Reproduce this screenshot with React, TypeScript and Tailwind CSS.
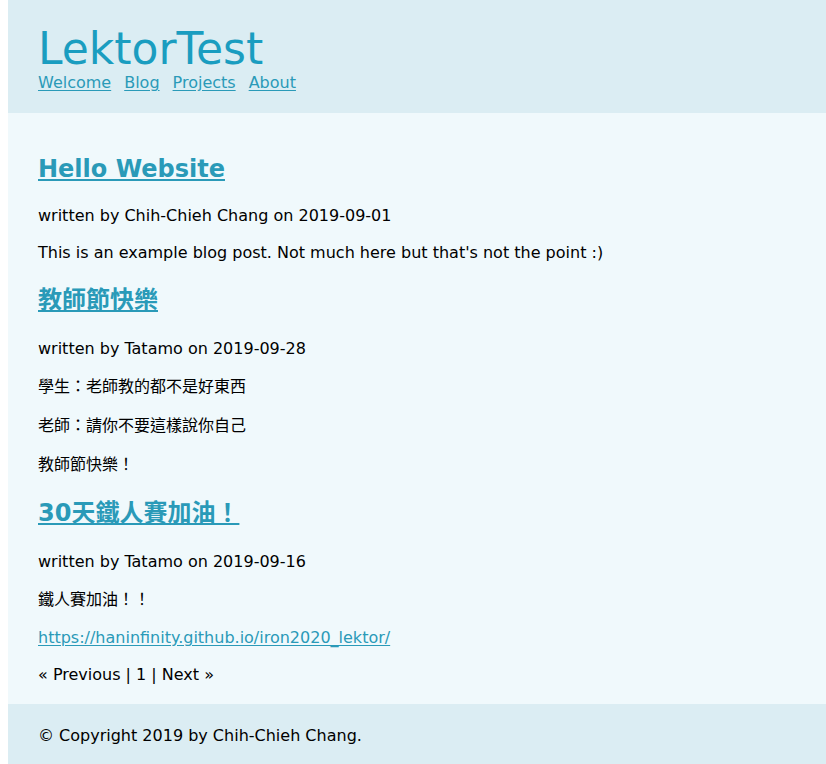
import React from 'react';

const font = "font-['DejaVu_Sans','Noto_Sans_CJK_TC',sans-serif]";
const linkCls = 'text-[#2a9ab8] underline underline-offset-[2px]';

function PostTitle({ children, cjk }: { children: React.ReactNode; cjk?: boolean }) {
  return (
    <h2
      className={`mt-[22px] text-[24px] leading-[30px] font-bold ${cjk ? 'mb-[23px]' : 'mb-[21px]'}`}
    >
      <a href="#" className={linkCls}>
        {children}
      </a>
    </h2>
  );
}

function Meta({ children }: { children: React.ReactNode }) {
  return <p className="text-[16px] leading-[21px]">{children}</p>;
}

function CjkLine({ children }: { children: React.ReactNode }) {
  return <p className="mt-[16px] text-[16px] leading-[23px]">{children}</p>;
}

export default function App() {
  return (
    <div className={`min-h-screen bg-white pl-2 text-black ${font}`}>
      {/* Header */}
      <header className="bg-[#dbedf3] px-[30px] pt-[24px] pb-[20px]">
        <h1 className="text-[44px] leading-[49px] text-[#1a9dc0]">LektorTest</h1>
        <nav className="flex gap-[13px] text-[16px] leading-[20px]">
          <a href="#" className={linkCls}>Welcome</a>
          <a href="#" className={linkCls}>Blog</a>
          <a href="#" className={linkCls}>Projects</a>
          <a href="#" className={linkCls}>About</a>
        </nav>
      </header>

      {/* Posts */}
      <main className="bg-[#f0f9fc] px-[30px] pt-[19px] pb-[19px]">
        <PostTitle>Hello Website</PostTitle>
        <Meta>written by Chih-Chieh Chang on 2019-09-01</Meta>
        <p className="mt-[16px] text-[16px] leading-[21px]">
          This is an example blog post. Not much here but that's not the point :)
        </p>

        <PostTitle cjk>教師節快樂</PostTitle>
        <Meta>written by Tatamo on 2019-09-28</Meta>
        <CjkLine>學生：老師教的都不是好東西</CjkLine>
        <CjkLine>老師：請你不要這樣說你自己</CjkLine>
        <CjkLine>教師節快樂！</CjkLine>

        <PostTitle cjk>30天鐵人賽加油！</PostTitle>
        <Meta>written by Tatamo on 2019-09-16</Meta>
        <CjkLine>鐵人賽加油！！</CjkLine>
        <p className="mt-[16px] text-[16px] leading-[21px]">
          <a href="#" className={linkCls}>https://haninfinity.github.io/iron2020_lektor/</a>
        </p>

        <div className="mt-[16px] text-[16px] leading-[21px]">« Previous | 1 | Next »</div>
      </main>

      {/* Footer */}
      <footer className="bg-[#dbedf3] px-[30px] pt-[21px] pb-[30px] text-[16px] leading-[21px]">
        © Copyright 2019 by Chih-Chieh Chang.
      </footer>
    </div>
  );
}
